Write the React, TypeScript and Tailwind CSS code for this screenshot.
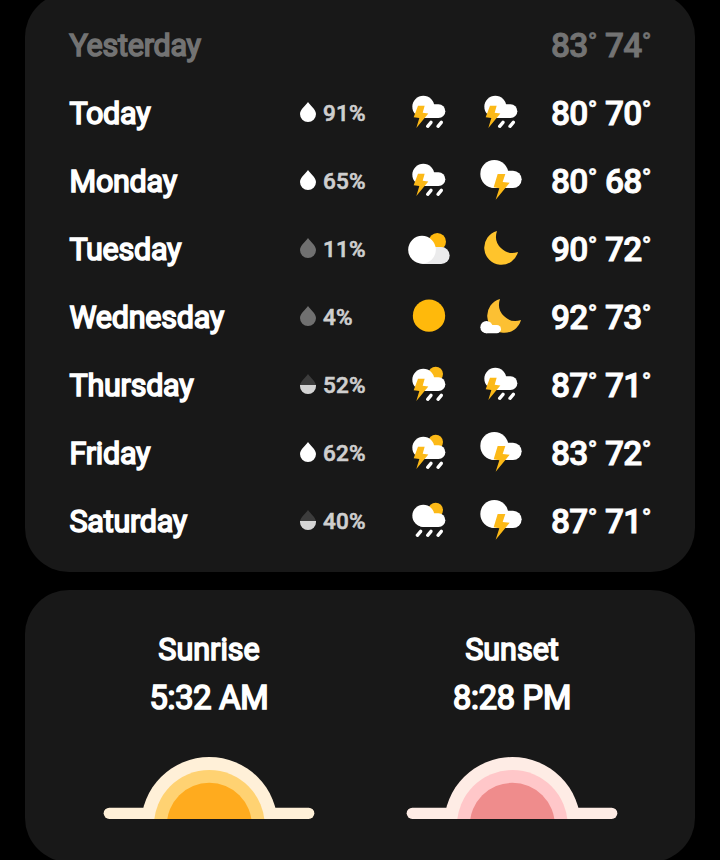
type Fill = "full" | "half" | "low";

type Day = {
  name: string;
  chance?: string;
  fill?: Fill;
  day?: keyof typeof icons;
  night?: keyof typeof icons;
  high: number;
  low: number;
};

function Cloud() {
  return (
    <g fill="#fff">
      <circle cx="55" cy="53" r="33" />
      <rect x="34" y="46" width="87" height="41" rx="20.5" />
    </g>
  );
}

function Rain({ count }: { count: number }) {
  return (
    <g stroke="#fff" strokeWidth="10" strokeLinecap="round">
      <path d="M78 100L68 112M109 100L99 112" />
      {count === 3 && <path d="M47 100L37 112" />}
    </g>
  );
}

function Bolt() {
  return <path d="M39 50H59L53 71L70 73.5L34 117L43 87L26 84.5Z" fill="#fcb917" />;
}

const icons = {
  stormRain: (
    <>
      <Cloud />
      <Bolt />
      <Rain count={2} />
    </>
  ),
  sunStormRain: (
    <>
      <circle cx="92" cy="39" r="22" fill="#fcb917" />
      <g transform="translate(0 3)">
        <Cloud />
        <Bolt />
        <Rain count={2} />
      </g>
    </>
  ),
  sunRain: (
    <>
      <circle cx="92" cy="39" r="22" fill="#fcb917" />
      <g transform="translate(0 3)">
        <Cloud />
        <Rain count={3} />
      </g>
    </>
  ),
  thunder: (
    <>
      <circle cx="52" cy="51" r="42" fill="#fff" />
      <rect x="28" y="41" width="106" height="52" rx="26" fill="#fff" />
      <path d="M62 51H85L77 75L98 77L56 128L67 94L50 91Z" fill="#fcb917" />
    </>
  ),
  partlyCloudy: (
    <>
      <circle cx="97" cy="50" r="26" fill="#ffb90f" />
      <rect x="28" y="66" width="106" height="51" rx="25.5" fill="#ebebec" />
      <circle cx="51" cy="74" r="41.5" fill="#fff" />
    </>
  ),
  sun: <circle cx="72" cy="68" r="48.5" fill="#ffb90b" />,
  moon: (
    <path
      d="M60 18A51.5 51.5 0 1 0 123 81A49.5 49.5 0 0 1 60 18Z"
      fill="#ffc42c"
    />
  ),
  moonCloud: (
    <>
      <path
        d="M69 18A51.5 51.5 0 1 0 132 81A49.5 49.5 0 0 1 69 18Z"
        fill="#fcc033"
      />
      <circle cx="28.5" cy="102.5" r="18.5" fill="#fff" />
      <rect x="16" y="96" width="56" height="25" rx="12.5" fill="#fff" />
    </>
  ),
};

const days: Day[] = [
  { name: "Yesterday", high: 83, low: 74 },
  { name: "Today", chance: "91%", fill: "full", day: "stormRain", night: "stormRain", high: 80, low: 70 },
  { name: "Monday", chance: "65%", fill: "full", day: "stormRain", night: "thunder", high: 80, low: 68 },
  { name: "Tuesday", chance: "11%", fill: "low", day: "partlyCloudy", night: "moon", high: 90, low: 72 },
  { name: "Wednesday", chance: "4%", fill: "low", day: "sun", night: "moonCloud", high: 92, low: 73 },
  { name: "Thursday", chance: "52%", fill: "half", day: "sunStormRain", night: "stormRain", high: 87, low: 71 },
  { name: "Friday", chance: "62%", fill: "full", day: "sunStormRain", night: "thunder", high: 83, low: 72 },
  { name: "Saturday", chance: "40%", fill: "half", day: "sunRain", night: "thunder", high: 87, low: 71 },
];

function Drop({ fill }: { fill: Fill }) {
  const color = { full: "#fff", half: "#3c3c3c", low: "#707070" }[fill];

  return (
    <svg viewBox="0 0 48 60" className="mb-[2px] h-[20px] w-[16px]">
      <path
        d="M24 0C28 8 48 22 48 36A24 24 0 0 1 0 36C0 22 20 8 24 0Z"
        fill={color}
      />
      {fill === "half" && (
        <path d="M0 33H48V36A24 24 0 0 1 0 36Z" fill="#d4d4d4" />
      )}
    </svg>
  );
}

function Horizon({ colors }: { colors: string[] }) {
  return (
    <svg viewBox="0 0 636 186" className="mt-[35px] h-[62px] w-[212px]">
      <rect x="2" y="152" width="632" height="34" rx="17" fill={colors[0]} />
      <circle cx="319" cy="205" r="205" fill={colors[0]} />
      <circle cx="319" cy="205" r="166" fill={colors[1]} />
      <circle cx="319" cy="205" r="127.5" fill={colors[2]} />
    </svg>
  );
}

function Temp({ value }: { value: number }) {
  return (
    <span className="flex w-[54px] items-start text-[33.5px] leading-[40px] font-medium tracking-[-0.7px] [-webkit-text-stroke:0.9px]">
      {value}
      <span className="text-[25px] leading-[33px] font-bold [-webkit-text-stroke:0.5px]">
        °
      </span>
    </span>
  );
}

function DayRow({ item }: { item: Day }) {
  return (
    <div
      className={`flex h-[68px] items-center ${
        item.chance ? "text-white" : "text-[#737373]"
      }`}
    >
      <div className="w-[231px] pt-[2px] pl-[0.5px] text-[30.5px] tracking-[-0.25px] [-webkit-text-stroke:1.6px]">
        {item.name}
      </div>
      <div className="flex w-[105px] items-center gap-[7px]">
        {item.fill && <Drop fill={item.fill} />}
        <span className="pt-px text-[22.5px] leading-[27px] font-medium tracking-[0.2px] text-[#cfcfcf] [-webkit-text-stroke:0.6px]">
          {item.chance}
        </span>
      </div>
      <div className="flex w-[146px] gap-6">
        {item.day && (
          <svg viewBox="0 0 144 144" className="size-12">
            {icons[item.day]}
          </svg>
        )}
        {item.night && (
          <svg viewBox="0 0 144 144" className="size-12">
            {icons[item.night]}
          </svg>
        )}
      </div>
      <div className="flex pt-[2px]">
        <Temp value={item.high} />
        <Temp value={item.low} />
      </div>
    </div>
  );
}

export default function App() {
  return (
    <main className="h-screen overflow-hidden bg-black px-[25px] font-['Roboto',sans-serif]">
      <section className="-mt-[7px] rounded-[44px] bg-[#181818] pt-[18px] pr-[20px] pb-[17px] pl-[44px]">
        {days.map((item) => (
          <DayRow key={item.name} item={item} />
        ))}
      </section>

      <section className="mt-[18px] flex h-[272px] rounded-[44px] bg-[#181818] pt-[36px] pl-[32.5px] text-white">
        <div className="flex w-[303px] flex-col items-center">
          <h2 className="text-[30.5px] leading-[48px] [-webkit-text-stroke:1.6px]">
            Sunrise
          </h2>
          <p className="text-[32.5px] leading-[48px] tracking-[-0.2px] [-webkit-text-stroke:1.7px]">
            5:32 AM
          </p>
          <Horizon colors={["#fff0d8", "#ffd272", "#ffab1e"]} />
        </div>
        <div className="flex w-[303px] flex-col items-center">
          <h2 className="text-[30.5px] leading-[48px] [-webkit-text-stroke:1.6px]">
            Sunset
          </h2>
          <p className="text-[32.5px] leading-[48px] tracking-[-0.2px] [-webkit-text-stroke:1.7px]">
            8:28 PM
          </p>
          <Horizon colors={["#feece5", "#ffc7c9", "#ef8c8c"]} />
        </div>
      </section>
    </main>
  );
}
